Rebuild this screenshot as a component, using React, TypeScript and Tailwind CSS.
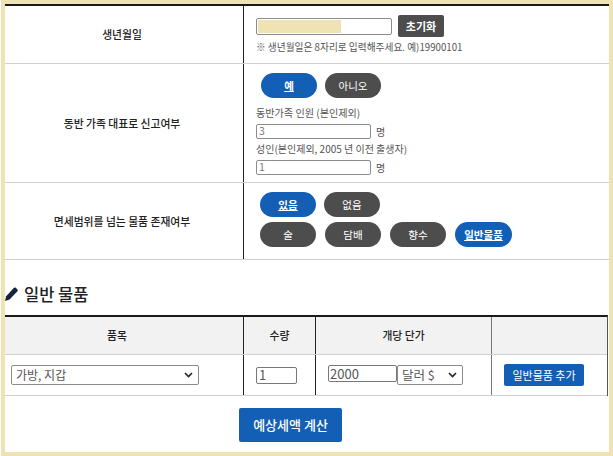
const font = "font-['Noto_Sans_CJK_KR','Liberation_Sans',sans-serif]";

function Pill({ label, active, wide }: { label: string; active?: boolean; wide?: boolean }) {
  return (
    <button
      className={
        "h-[25px] rounded-[13px] text-[10.5px] text-white flex items-center justify-center " +
        (wide ? "w-[57px] " : "w-[56px] ") +
        (active ? "bg-[#135fb5] underline font-bold" : "bg-[#4d4d4d]")
      }
    >
      {label}
    </button>
  );
}

function CountRow({ value }: { value: string }) {
  return (
    <div className="flex items-center h-[18px] gap-[5px]">
      <input
        readOnly
        value={value}
        className="w-[115px] h-[15px] border border-[#8c8c8c] rounded-[2px] px-[2px] text-[10.5px] text-[#777] bg-white outline-none"
      />
      <span className="text-[10px] text-[#555]">명</span>
    </div>
  );
}

export default function App() {
  return (
    <div className="w-[613px] h-[456px] bg-white pl-px">
      <div className={`w-[612px] h-[456px] overflow-hidden bg-white border-t-[4px] border-b-[4px] border-l-[4px] border-r-[4px] border-[#f0e3b3] ${font}`}>
        {/* 여행자 정보 */}
        <div className="border-t-2 border-[#1a1a1a] text-[#222]">
          <div className="flex h-[58px] border-b border-[#d0d0d0]">
            <div className="w-[239px] flex items-center justify-center pr-[4px] text-[10.8px] font-medium border-r border-[#222]">생년월일</div>
            <div className="flex-1 pl-[12px] pt-[9px]">
              <div className="flex items-center gap-[6px]">
                <div className="w-[136px] h-[17px] border border-[#8c8c8c] rounded-[2px] bg-white overflow-hidden p-px">
                  <div className="w-[83px] h-full bg-[#f0e3b3]" />
                </div>
                <button className="w-[46px] h-[22px] rounded-[2px] bg-[#4d4d4d] text-white text-[11px] font-bold">초기화</button>
              </div>
              <p className="mt-[3px] text-[9.7px] leading-[14px] text-[#555]">※ 생년월일은 8자리로 입력해주세요. 예)19900101</p>
            </div>
          </div>

          <div className="flex h-[119px] border-b border-[#d0d0d0]">
            <div className="w-[239px] flex items-center justify-center pr-[4px] text-[10.8px] font-medium border-r border-[#222]">동반 가족 대표로 신고여부</div>
            <div className="flex-1 pl-[12px] pt-[9px]">
              <div className="flex gap-[8px] pl-[5px]">
                <Pill label="예" active />
                <Pill label="아니오" />
              </div>
              <p className="mt-[6px] text-[10.1px] leading-[18px] text-[#555]">동반가족 인원 (본인제외)</p>
              <CountRow value="3" />
              <p className="text-[10px] leading-[18px] text-[#555]">성인(본인제외, 2005 년 이전 출생자)</p>
              <CountRow value="1" />
            </div>
          </div>

          <div className="flex h-[77px] border-b border-[#d0d0d0]">
            <div className="w-[239px] flex items-center justify-center pr-[4px] text-[10.8px] font-medium border-r border-[#222]">면세범위를 넘는 물품 존재여부</div>
            <div className="flex-1 pl-[16px] pt-[9px]">
              <div className="flex gap-[8px]">
                <Pill label="있음" active />
                <Pill label="없음" />
              </div>
              <div className="flex gap-[9px] mt-[5px]">
                <Pill label="술" />
                <Pill label="담배" />
                <Pill label="향수" />
                <Pill label="일반물품" active wide />
              </div>
            </div>
          </div>
        </div>

        {/* 일반 물품 */}
        <div className="flex items-center h-[55px] pt-[13px] gap-[6px] text-[#222]">
          <svg width="13" height="14" viewBox="0 0 13 14" className="shrink-0">
            <path d="M0 14 L1.2 9.2 L9 0.8 Q9.8 0 10.8 0.8 L12.4 2.4 Q13.2 3.3 12.4 4.2 L4.6 12.6 Z" fill="#14233a" />
          </svg>
          <h2 className="text-[16.5px] font-medium leading-none">일반 물품</h2>
        </div>

        <div className="w-[603px] border-t-2 border-[#1a1a1a] border-r border-r-[#555] text-[#222]">
          <div className="flex h-[38px] bg-[#f2f2f2] border-b border-[#d0d0d0] text-[10.8px] font-medium">
            <div className="w-[239px] flex items-center justify-center pr-[14px] border-r border-[#222]">품목</div>
            <div className="w-[72px] flex items-center justify-center border-r border-[#222]">수량</div>
            <div className="w-[176px] flex items-center justify-center border-r border-[#777]">개당 단가</div>
            <div className="flex-1" />
          </div>
          <div className="flex h-[41px] border-b border-[#d0d0d0]">
            <div className="w-[239px] flex items-center pl-[6px] border-r border-[#222]">
              <div className="w-[188px] h-[20px] border border-[#8c8c8c] rounded-[2px] flex items-center justify-between pl-[4px] pr-[5px] text-[12px] text-[#555]">
                <span>가방, 지갑</span>
                <svg width="9" height="6" viewBox="0 0 9 6"><path d="M1 1 L4.5 4.5 L8 1" fill="none" stroke="#222" strokeWidth="1.6" /></svg>
              </div>
            </div>
            <div className="w-[72px] flex items-center pl-[12px] border-r border-[#222]">
              <input readOnly value="1" className="w-[41px] h-[17px] border border-[#777] rounded-[2px] px-[2px] text-[13px] text-[#555] outline-none" />
            </div>
            <div className="w-[176px] flex items-center pl-[12px] border-r border-[#777]">
              <input readOnly value="2000" className="w-[69px] h-[17px] mb-[3px] border border-[#777] rounded-[2px] px-px text-[13px] text-[#555] outline-none" />
              <div className="w-[66px] h-[20px] border border-[#8c8c8c] rounded-[2px] flex items-center justify-between pl-[4px] pr-[5px] text-[12.5px] text-[#555]">
                <span>달러 $</span>
                <svg width="9" height="6" viewBox="0 0 9 6"><path d="M1 1 L4.5 4.5 L8 1" fill="none" stroke="#222" strokeWidth="1.6" /></svg>
              </div>
            </div>
            <div className="flex-1 flex items-center pl-[12px]">
              <button className="w-[80px] h-[22px] rounded-[2px] bg-[#135fb5] text-white text-[11px]">일반물품 추가</button>
            </div>
          </div>
        </div>

        <div className="flex justify-center pt-[12px] pr-[33px]">
          <button className="w-[103px] h-[34px] rounded-[2px] bg-[#135fb5] text-white text-[13px] font-medium">예상세액 계산</button>
        </div>
      </div>
    </div>
  );
}
